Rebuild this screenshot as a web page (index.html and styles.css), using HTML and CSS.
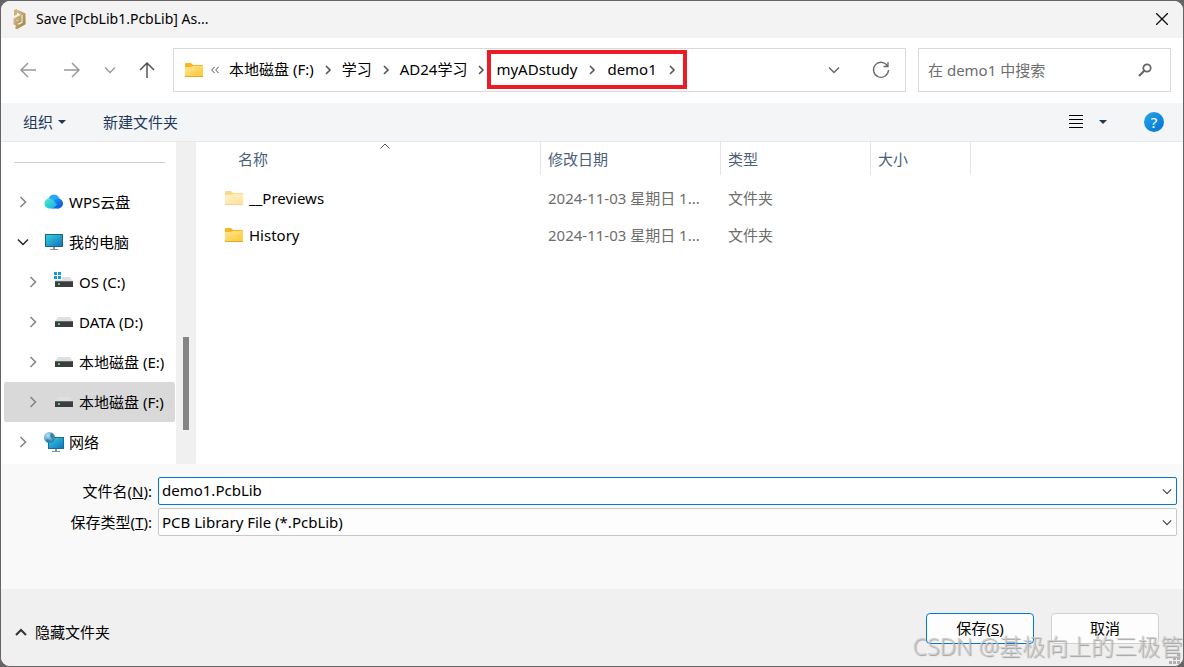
FILE: index.html
```html
<!DOCTYPE html>
<html lang="zh-CN">
<head>
  <meta charset="UTF-8">
  <meta name="viewport" content="width=device-width, initial-scale=1.0">
  <title>Save [PcbLib1.PcbLib] As...</title>
  <link rel="stylesheet" href="styles.css">
</head>
<body>
  <!-- shared icons -->
  <svg class="defs" width="0" height="0" aria-hidden="true">
    <defs>
      <linearGradient id="folderFill" x1="0" y1="0" x2="1" y2="1">
        <stop offset="0" stop-color="#ffe596"/><stop offset="1" stop-color="#ffc937"/>
      </linearGradient>
      <linearGradient id="screenFill" x1="0" y1="0" x2="1" y2="1">
        <stop offset="0" stop-color="#35d0e0"/><stop offset="1" stop-color="#1272bd"/>
      </linearGradient>
      <linearGradient id="goldFill" x1="0" y1="0" x2="1" y2="1">
        <stop offset="0" stop-color="#d9c28a"/><stop offset="1" stop-color="#a58447"/>
      </linearGradient>
      <linearGradient id="cloudLeft" x1="0" y1="0" x2="1" y2="1">
        <stop offset="0" stop-color="#4df0c0"/><stop offset="1" stop-color="#18a8f0"/>
      </linearGradient>
      <linearGradient id="cloudRight" x1="0" y1="0" x2="1" y2="1">
        <stop offset="0" stop-color="#1f9bff"/><stop offset="1" stop-color="#0a4fd0"/>
      </linearGradient>
      <radialGradient id="globeFill" cx="0.35" cy="0.3" r="0.8">
        <stop offset="0" stop-color="#b8e4f4"/><stop offset="1" stop-color="#1d6f9e"/>
      </radialGradient>
    </defs>
    <symbol id="folder" viewBox="0 0 18 14">
      <path d="M0 1q0-1 1-1h5l2 2h9q1 0 1 1v5H0z" fill="#f8b51c"/>
      <path d="M0 4h6l2-1h10v10H0z" fill="url(#folderFill)"/>
      <path d="M0 13h18v1H0z" fill="#e9a52a"/>
    </symbol>
    <symbol id="chevron" viewBox="0 0 8 12">
      <path d="M2 2l4 4-4 4" fill="none" stroke="currentColor" stroke-width="1.6"/>
    </symbol>
    <symbol id="chevronTree" viewBox="0 0 8 12">
      <path d="M1.500 1l5 5-5 5" fill="none" stroke="currentColor" stroke-width="1.6"/>
    </symbol>
    <symbol id="chevronDown" viewBox="0 0 12 8">
      <path d="M1 1.500l5 5 5-5" fill="none" stroke="currentColor" stroke-width="1.400"/>
    </symbol>
    <symbol id="disk" viewBox="0 0 18 10">
      <path d="M3 0h12l3 4H0z" fill="#dedfe3"/>
      <path d="M0 4h18v6H0z" fill="#3c3d3f"/>
      <path d="M0 4h18v1H0z" fill="#66676a"/>
      <path d="M3 6h2v2H3z" fill="#41e04a"/>
    </symbol>
    <symbol id="screen" viewBox="0 0 18 16">
      <path d="M0 0h18v13H0z" fill="#23627f"/>
      <path d="M1 1h16v11H1z" fill="url(#screenFill)"/>
      <path d="M8 13h2v2H8zM5 15h8v1H5z" fill="#85939c"/>
    </symbol>
  </svg>

  <div class="dialog">
    <header class="title-bar">
      <svg class="app-logo" width="14" height="20" viewBox="0 0 14 20">
        <path d="M4 2l7 3.500v9L4 18.500v-3l-2-1v-4l5-2.500v4l-2 1v1" fill="none" stroke="url(#goldFill)" stroke-width="3"/>
        <path d="M1 1v6l3-1.500V0z" fill="#ccb478"/>
      </svg>
      <h1>Save [PcbLib1.PcbLib] As...</h1>
      <button class="close" aria-label="关闭">
        <svg width="12" height="12" viewBox="0 0 12 12"><path d="M0 0l12 12M12 0L0 12" stroke="#111" stroke-width="1.300"/></svg>
      </button>
    </header>

    <nav class="nav-bar">
      <div class="history">
        <button class="dim" aria-label="返回"><svg width="16" height="16" viewBox="0 0 16 16"><path d="M16 8H1M8 1L1 8l7 7"/></svg></button>
        <button class="dim" aria-label="前进"><svg width="16" height="16" viewBox="0 0 16 16"><path d="M0 8h15M8 1l7 7-7 7"/></svg></button>
        <button class="dim recent" aria-label="最近浏览的位置"><svg width="12" height="8"><use href="#chevronDown"/></svg></button>
        <button aria-label="上移"><svg width="16" height="16" viewBox="0 0 16 16"><path d="M8 16V1M1 8l7-7 7 7"/></svg></button>
      </div>
      <div class="address">
        <svg class="address-folder" width="18" height="14"><use href="#folder"/></svg>
        <svg class="more" width="8" height="8" viewBox="0 0 8 8"><path d="M3.500 1L.7 4l2.800 3M7.500 1L4.700 4l2.800 3" fill="none" stroke="#555"/></svg>
        <a href="#">本地磁盘 (F:)</a>
        <svg class="sep" width="8" height="12"><use href="#chevron"/></svg>
        <a href="#">学习</a>
        <svg class="sep" width="8" height="12"><use href="#chevron"/></svg>
        <a href="#">AD24学习</a>
        <svg class="sep" width="8" height="12"><use href="#chevron"/></svg>
        <span class="marked">
          <a href="#">myADstudy</a>
          <svg class="sep" width="8" height="12"><use href="#chevron"/></svg>
          <a href="#">demo1</a>
          <svg class="sep" width="8" height="12"><use href="#chevron"/></svg>
        </span>
        <div class="address-tools">
          <button aria-label="以前的位置"><svg width="12" height="8"><use href="#chevronDown"/></svg></button>
          <button aria-label="刷新"><svg width="18" height="18" viewBox="0 0 18 18"><path d="M15.500 5A7.500 7.500 0 1 0 16.500 9M16 1v4.500h-4.500" fill="none" stroke="currentColor" stroke-width="1.300"/></svg></button>
        </div>
      </div>
      <div class="search">
        <input type="text" placeholder="在 demo1 中搜索" aria-label="搜索">
        <svg width="14" height="14" viewBox="0 0 14 14"><g fill="none" stroke="#666"><circle cx="9" cy="5" r="3.700" stroke-width="1.800"/><path d="M6.500 7.500L1 13" stroke-width="2.200"/></g></svg>
      </div>
    </nav>

    <div class="toolbar">
      <button>组织 <span class="caret"></span></button>
      <button>新建文件夹</button>
      <div class="view-tools">
        <button class="view" aria-label="更改视图"><svg width="14" height="14" viewBox="0 0 14 14"><path d="M0 .5h14M0 4.500h14M0 8.500h14M0 12.500h14" stroke="#000"/></svg></button>
        <button class="view-more" aria-label="更多选项"><span class="caret"></span></button>
        <button class="help" aria-label="帮助">?</button>
      </div>
    </div>

    <main class="browser">
      <aside class="sidebar">
        <hr>
        <ul class="tree">
          <li><a href="#"><svg class="arrow" width="8" height="12"><use href="#chevronTree"/></svg>
            <svg class="icon" width="20" height="16" viewBox="0 0 20 16"><circle cx="10" cy="6" r="5.500" fill="#28a8f4"/><circle cx="14" cy="9.500" r="5" fill="url(#cloudRight)"/><path d="M5.500 14.500a5 5 0 1 1 4-8L13 11q-1.500 3.500-4 3.500z" fill="url(#cloudLeft)"/><path d="M7 14.500q3 0 6-3.500l2 3.500z" fill="#0869e4"/></svg>
            WPS云盘</a></li>
          <li><a href="#"><svg class="arrow open" width="12" height="8"><use href="#chevronDown"/></svg>
            <svg class="icon" width="20" height="16"><use href="#screen"/></svg>
            我的电脑</a></li>
          <li class="child"><a href="#"><svg class="arrow" width="8" height="12"><use href="#chevronTree"/></svg>
            <svg class="icon" width="20" height="20" viewBox="0 0 20 20"><path d="M0 0h3v3H0zM4 0h3v3H4zM0 4h3v3H0zM4 4h3v3H4z" fill="#1698df"/><path d="M8 5h8l3 4H1V8h7z" fill="#dedfe3"/><path d="M1 9h18v6H1z" fill="#3c3d3f"/><path d="M1 9h18v1H1z" fill="#66676a"/><path d="M4 11h2v2H4z" fill="#41e04a"/></svg>
            OS (C:)</a></li>
          <li class="child"><a href="#"><svg class="arrow" width="8" height="12"><use href="#chevronTree"/></svg>
            <svg class="icon" width="20" height="10"><use href="#disk"/></svg>
            DATA (D:)</a></li>
          <li class="child"><a href="#"><svg class="arrow" width="8" height="12"><use href="#chevronTree"/></svg>
            <svg class="icon" width="20" height="10"><use href="#disk"/></svg>
            本地磁盘 (E:)</a></li>
          <li class="child selected"><a href="#"><svg class="arrow" width="8" height="12"><use href="#chevronTree"/></svg>
            <svg class="icon" width="20" height="10"><use href="#disk"/></svg>
            本地磁盘 (F:)</a></li>
          <li><a href="#"><svg class="arrow" width="8" height="12"><use href="#chevronTree"/></svg>
            <svg class="icon" width="20" height="20" viewBox="0 0 20 20"><path d="M4 5h16v12H4z" fill="#176d9c"/><path d="M5 6h14v10H5z" fill="url(#screenFill)"/><path d="M11 17h2v2h-2zM8 19h8v1H8z" fill="#85939c"/><circle cx="5.500" cy="5.500" r="5.500" fill="url(#globeFill)"/><path d="M7 1q3 1 3.500 4L8 7 6 4zM3 7l3 1v3q-3 0-4-2z" fill="#2c83ae"/></svg>
            网络</a></li>
        </ul>
      </aside>
      <div class="scroll-track"><div class="scroll-thumb"></div></div>

      <section class="files">
        <table>
          <colgroup>
            <col class="col-name"><col class="col-date"><col class="col-type"><col class="col-size"><col>
          </colgroup>
          <thead>
            <tr>
              <th class="sorted">名称<svg class="sort" width="10" height="6" viewBox="0 0 10 6"><path d="M.5 5.500L5 1l4.500 4.500" fill="none" stroke="#555"/></svg></th>
              <th>修改日期</th>
              <th>类型</th>
              <th>大小</th>
              <td></td>
            </tr>
          </thead>
          <tbody>
            <tr>
              <td class="name"><div><svg class="faded" width="18" height="14"><use href="#folder"/></svg>__Previews</div></td>
              <td>2024-11-03 星期日 1...</td>
              <td>文件夹</td>
              <td></td>
              <td></td>
            </tr>
            <tr>
              <td class="name"><div><svg width="18" height="14"><use href="#folder"/></svg>History</div></td>
              <td>2024-11-03 星期日 1...</td>
              <td>文件夹</td>
              <td></td>
              <td></td>
            </tr>
          </tbody>
        </table>
      </section>
    </main>

    <form class="fields">
      <label for="fileName">文件名(<u>N</u>):</label>
      <div class="combo active">
        <input type="text" id="fileName" value="demo1.PcbLib">
        <svg width="10" height="7" viewBox="0 0 12 8"><use href="#chevronDown"/></svg>
      </div>
      <label for="fileType">保存类型(<u>T</u>):</label>
      <div class="combo">
        <select id="fileType"><option>PCB Library File (*.PcbLib)</option></select>
        <svg width="10" height="7" viewBox="0 0 12 8"><use href="#chevronDown"/></svg>
      </div>
    </form>

    <footer class="actions">
      <button class="toggle"><svg width="12" height="8" viewBox="0 0 12 8"><path d="M1 7l5-5 5 5" fill="none" stroke="#333" stroke-width="2"/></svg>隐藏文件夹</button>
      <button class="btn primary">保存(<u>S</u>)</button>
      <button class="btn">取消</button>
    </footer>

    <div class="watermark">CSDN @基极向上的三极管</div>
    <svg class="grip" width="11" height="11" viewBox="0 0 11 11"><path d="M8 0h3v3H8zM4 4h3v3H4zM8 4h3v3H8zM0 8h3v3H0zM4 8h3v3H4zM8 8h3v3H8z" fill="#b0b0b0"/></svg>
  </div>
</body>
</html>
```
FILE: styles.css
```css
* {
  box-sizing: border-box;
}

body {
  margin: 0;
  background: #666364;
  color: #000;
  font-family: "Noto Sans", "Noto Sans CJK SC", sans-serif;
  font-size: 15px;
  line-height: 20px;
}

button,
input,
select {
  font: inherit;
  color: inherit;
}

button {
  display: flex;
  align-items: center;
  justify-content: center;
  padding: 0;
  border: 0;
  background: none;
}

a {
  color: inherit;
  text-decoration: none;
}

svg {
  flex: none;
}

.defs {
  position: absolute;
}

.dialog {
  position: relative;
  display: flex;
  flex-direction: column;
  min-height: 100vh;
  border: 1px solid #666364;
  border-radius: 10px;
  background: #fff;
  overflow: hidden;
}

/* title */
.title-bar {
  display: flex;
  align-items: center;
  height: 37px;
  padding: 0 15px 1px 12px;
  background: #f3f3f3;
}

.title-bar h1 {
  flex: 1;
  margin: 0 0 0 9px;
  font-size: 14px;
  font-weight: normal;
}

/* navigation */
.nav-bar {
  display: flex;
  align-items: center;
  height: 65px;
  padding: 0 12px 2px 19px;
}

.history {
  display: flex;
  gap: 28px;
  margin-right: 18px;
  color: #555;
}

.history path {
  fill: none;
  stroke: currentColor;
  stroke-width: 1.5;
}

.history .dim {
  color: #999;
}

.history .recent {
  margin: 0 -5px 0 -4px;
}

.address,
.search {
  display: flex;
  align-items: center;
  height: 44px;
  border: 1px solid #d9d9d9;
  background: #fff;
}

.address {
  flex: 1;
  padding: 0 15px 0 11px;
  white-space: nowrap;
}

.address a {
  padding-bottom: 2px;
}

.more {
  margin: 0 10px 0 8px;
}

.sep {
  margin: 0 10px;
  color: #555;
}

.marked {
  display: flex;
  align-items: center;
  height: 31px;
  margin-left: -4px;
  padding-left: 5px;
  outline: 4px solid #ed1c24;
}

.marked .sep {
  margin: 0 11px;
}

.marked .sep:last-child {
  margin-right: 7px;
}

.address-tools {
  display: flex;
  gap: 32px;
  margin-left: auto;
  color: #666;
}

.search {
  width: 253px;
  margin-left: 12px;
  padding: 0 18px 0 9px;
}

.search input {
  flex: 1;
  min-width: 0;
  padding: 0;
  border: 0;
  outline: 0;
  background: none;
}

.search input::placeholder {
  color: #6d6d6d;
}

/* toolbar */
.toolbar {
  display: flex;
  align-items: center;
  gap: 37px;
  height: 39px;
  padding: 0 19px 0 22px;
  border-bottom: 1px solid #e8e8ea;
  background: #f4f5f7;
  color: #1e395b;
}

.caret {
  border: 4px solid transparent;
  border-top-color: #1e395b;
  border-bottom: 0;
}

.toolbar > button .caret {
  margin-left: 5px;
}

.view-tools {
  display: flex;
  align-items: center;
  margin-left: auto;
}

.view {
  margin-right: 16px;
}

.view-more {
  margin-right: 37px;
}

.help {
  width: 20px;
  height: 20px;
  border-radius: 50%;
  background: linear-gradient(135deg, #27a5e8, #0072d6);
  color: #fff;
}

/* tree and file list */
.browser {
  display: flex;
  flex: 1;
}

.sidebar {
  width: 175px;
  padding: 20px 1px 2px 3px;
}

.sidebar hr {
  height: 1px;
  margin: 0 10px 19px;
  border: 0;
  background: #cfcfcf;
}

.tree {
  margin: 0;
  padding: 0;
  list-style: none;
}

.tree a {
  display: flex;
  align-items: center;
  height: 40px;
  padding-left: 15px;
  border-radius: 2px;
  white-space: nowrap;
}

.tree .child a {
  padding-left: 25px;
}

.tree .selected a {
  background: #d9d9d9;
}

.arrow {
  margin-right: 17px;
  color: #858585;
}

.arrow.open {
  margin: 0 15px 0 -2px;
  color: #222;
}

.icon {
  margin-right: 5px;
}

.scroll-track {
  width: 20px;
  padding: 195px 7px 34px;
  background: #f0f0f0;
}

.scroll-thumb {
  height: 93px;
  background: #858585;
}

.files {
  flex: 1;
  min-width: 0;
}

.files table {
  width: 100%;
  table-layout: fixed;
  border-collapse: separate;
  border-spacing: 0;
}

.col-name {
  width: 345px;
}

.col-date {
  width: 180px;
}

.col-type {
  width: 150px;
}

.col-size {
  width: 100px;
}

.files th {
  height: 33px;
  padding: 0 0 0 7px;
  border-right: 1px solid #e5e5e5;
  color: #4c607a;
  font-weight: normal;
  text-align: left;
}

.files th.sorted {
  position: relative;
  padding-left: 42px;
}

.sort {
  position: absolute;
  top: 1px;
  left: 55%;
  margin-left: -5px;
}

.files tbody::before {
  content: "";
  display: block;
  height: 4px;
}

.files tbody td {
  height: 37px;
  padding: 0 0 0 7px;
  color: #6d6d6d;
  white-space: nowrap;
}

.files tbody .name {
  padding-left: 29px;
  color: #000;
}

.name div {
  display: flex;
  align-items: center;
  gap: 6px;
}

.faded {
  opacity: 0.5;
}

/* name and type fields */
.fields {
  display: grid;
  grid-template-columns: 151px 1fr;
  grid-auto-rows: 28px;
  align-items: center;
  gap: 3px 6px;
  height: 125px;
  padding: 13px 6px 0 0;
  background: #f9f9f9;
}

.fields label {
  text-align: right;
}

.combo {
  position: relative;
  height: 28px;
  color: #444;
}

.combo input,
.combo select {
  display: block;
  width: 100%;
  height: 28px;
  padding: 0 24px 0 3px;
  border: 1px solid #c8c8c8;
  border-radius: 2px;
  outline: 0;
  background: #fdfdfd;
  color: #000;
  appearance: none;
}

.combo.active input {
  padding-bottom: 2px;
  border-color: #0078d4;
  background: #fff;
}

.combo svg {
  position: absolute;
  top: 11px;
  right: 5px;
  pointer-events: none;
}

/* bottom buttons */
.actions {
  display: flex;
  align-items: center;
  gap: 17px;
  height: 77px;
  padding: 1px 24px 0 14px;
  background: #f0f0f0;
}

.toggle {
  gap: 8px;
  margin: 8px auto 0 0;
}

.btn {
  width: 108px;
  height: 31px;
  border: 1px solid #d0d0d0;
  border-radius: 4px;
  background: #fdfdfd;
}

.btn.primary {
  border-color: #0078d4;
}

.grip {
  position: absolute;
  right: 3px;
  bottom: 2px;
}

.watermark {
  position: absolute;
  right: 0;
  bottom: 5px;
  color: rgba(205, 205, 205, 0.9);
  font-size: 23px;
  font-weight: 300;
  line-height: 30px;
  text-shadow: 1px 1px 1px rgba(120, 120, 120, 0.7);
  white-space: nowrap;
  pointer-events: none;
}
```
